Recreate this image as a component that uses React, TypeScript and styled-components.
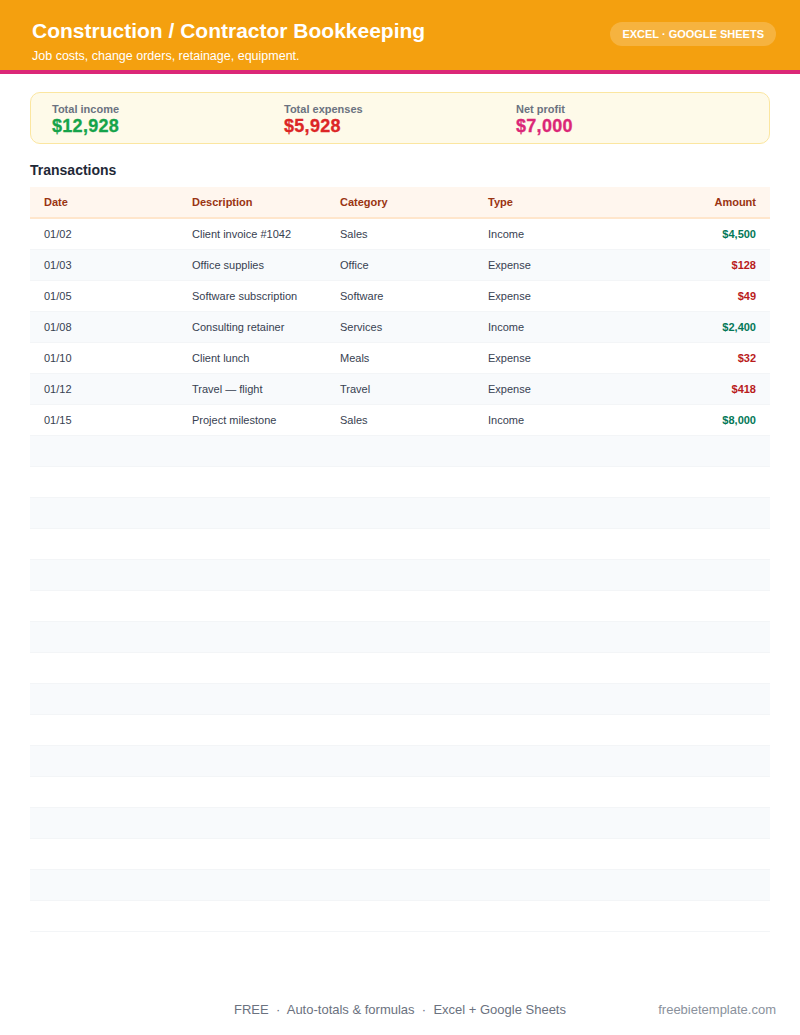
import React from "react";
import styled, { createGlobalStyle } from "styled-components";

const Global = createGlobalStyle`
  html, body { margin: 0; padding: 0; background: #fff; }
  body { font-family: "Liberation Sans", Arial, sans-serif; }
`;

const Page = styled.div`
  width: 800px; height: 1035px; display: flex; flex-direction: column; position: relative;
`;
const Header = styled.header`
  background: #f4a00f; height: 70px; border-bottom: 4px solid #db2777;
  display: flex; justify-content: space-between; align-items: flex-start;
  padding: 0 24px 0 32px; box-sizing: content-box;
`;
const TitleBox = styled.div` padding-top: 18px; color: #fff; `;
const Title = styled.h1` margin: 0; font-size: 21px; font-weight: 700; line-height: 26px; `;
const Sub = styled.div` font-size: 12.5px; margin-top: 4px; line-height: 16px; `;
const Badge = styled.div`
  margin-top: 22px; height: 24px; padding: 0 12px; border-radius: 12px;
  background: rgba(255,255,255,0.2); color: #fff; font-size: 11px; font-weight: 700;
  display: flex; align-items: center;
`;
const Body = styled.main` padding: 18px 30px 0; flex: 1; `;
const Summary = styled.div`
  background: #fefae9; border: 1px solid #fbe6a0; border-radius: 10px; height: 50px;
  display: grid; grid-template-columns: repeat(3, 1fr); padding: 0 21px; align-items: center;
`;
const Stat = styled.div` display: flex; flex-direction: column; padding-top: 2px; `;
const Label = styled.div` font-size: 11px; font-weight: 700; color: #6b7280; line-height: 14px; `;
const Value = styled.div<{ $c: string }>`
  font-size: 18px; font-weight: 900; color: ${p => p.$c}; line-height: 20px; letter-spacing: 0.3px;
  -webkit-text-stroke: 0.3px ${p => p.$c};
`;
const Section = styled.h2` margin: 17px 0 8px; font-size: 14px; font-weight: 700; color: #1f2937; line-height: 18px; `;
const Row = styled.div<{ $bg?: string; $head?: boolean }>`
  display: grid; grid-template-columns: 148px 148px 148px 1fr 120px; padding: 0 14px;
  height: ${p => (p.$head ? "32px" : "31px")}; align-items: center; box-sizing: border-box;
  background: ${p => p.$bg || "#fff"};
  border-bottom: ${p => (p.$head ? "2px solid #ffe6cc" : "1px solid #f3f5f7")};
  font-size: 11px; color: ${p => (p.$head ? "#9a3412" : "#374151")};
  font-weight: ${p => (p.$head ? 700 : 400)};
`;
const Amt = styled.div<{ $c?: string }>` text-align: right; font-weight: 700; color: ${p => p.$c || "inherit"}; `;
const Footer = styled.footer`
  height: 52px; display: flex; align-items: center; justify-content: center; position: relative;
  font-size: 13px; color: #6b7280;
`;
const Site = styled.span` position: absolute; right: 24px; color: #8a919c; `;

const data = [
  ["01/02", "Client invoice #1042", "Sales", "Income", "$4,500"],
  ["01/03", "Office supplies", "Office", "Expense", "$128"],
  ["01/05", "Software subscription", "Software", "Expense", "$49"],
  ["01/08", "Consulting retainer", "Services", "Income", "$2,400"],
  ["01/10", "Client lunch", "Meals", "Expense", "$32"],
  ["01/12", "Travel — flight", "Travel", "Expense", "$418"],
  ["01/15", "Project milestone", "Sales", "Income", "$8,000"],
];

export default function App() {
  const rows = Array.from({ length: 23 }, (_, i) => data[i] || null);
  return (
    <Page>
      <Global />
      <Header>
        <TitleBox>
          <Title>Construction / Contractor Bookkeeping</Title>
          <Sub>Job costs, change orders, retainage, equipment.</Sub>
        </TitleBox>
        <Badge>EXCEL · GOOGLE SHEETS</Badge>
      </Header>
      <Body>
        <Summary>
          <Stat><Label>Total income</Label><Value $c="#16a34a">$12,928</Value></Stat>
          <Stat><Label>Total expenses</Label><Value $c="#dc2626">$5,928</Value></Stat>
          <Stat><Label>Net profit</Label><Value $c="#db2777">$7,000</Value></Stat>
        </Summary>
        <Section>Transactions</Section>
        <Row $head $bg="#fff6ee">
          <div>Date</div><div>Description</div><div>Category</div><div>Type</div><Amt>Amount</Amt>
        </Row>
        {rows.map((r, i) => (
          <Row key={i} $bg={i % 2 ? "#f8fafc" : "#fff"}>
            {r ? (
              <>
                <div>{r[0]}</div><div>{r[1]}</div><div>{r[2]}</div><div>{r[3]}</div>
                <Amt $c={r[3] === "Income" ? "#047857" : "#b91c1c"}>{r[4]}</Amt>
              </>
            ) : null}
          </Row>
        ))}
      </Body>
      <Footer>
        FREE &nbsp;·&nbsp; Auto-totals &amp; formulas &nbsp;·&nbsp; Excel + Google Sheets
        <Site>freebietemplate.com</Site>
      </Footer>
    </Page>
  );
}
